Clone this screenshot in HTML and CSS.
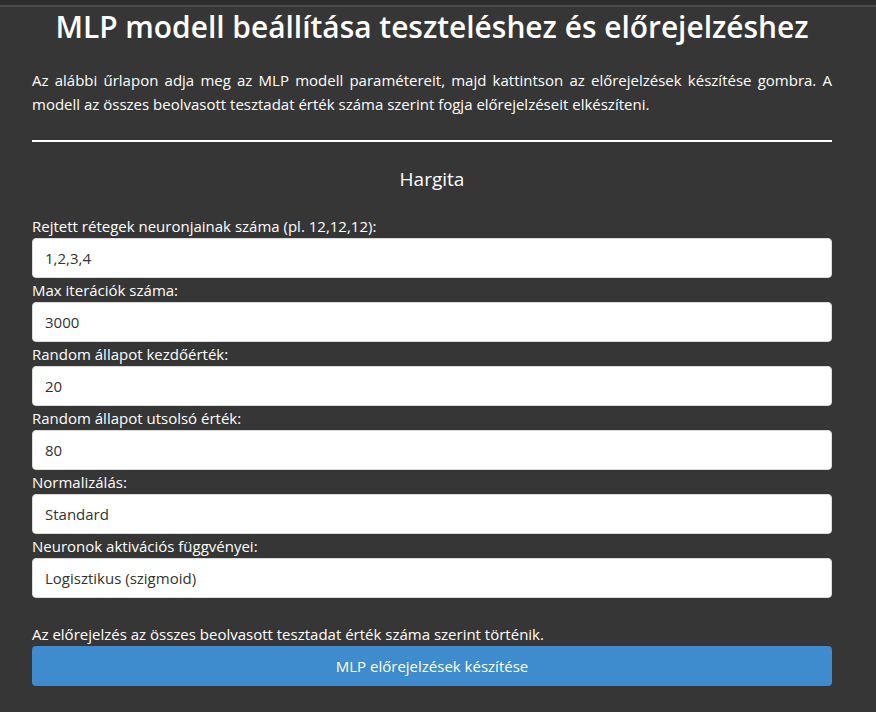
FILE: index.html
```html
<!DOCTYPE html>
<html lang="hu">
<head>
<meta charset="utf-8">
<title>MLP modell</title>
<link rel="stylesheet" href="styles.css">
</head>
<body>
<div class="topbar"></div>
<main class="container">
  <h1 class="title">MLP modell beállítása teszteléshez és előrejelzéshez</h1>
  <p class="intro">Az alábbi űrlapon adja meg az MLP modell paramétereit, majd kattintson az előrejelzések készítése gombra. A modell az összes beolvasott tesztadat érték száma szerint fogja előrejelzéseit elkészíteni.</p>
  <hr class="divider">
  <h2 class="region">Hargita</h2>
  <form class="form">
    <label class="label">Rejtett rétegek neuronjainak száma (pl. 12,12,12):</label>
    <input class="field" type="text" value="1,2,3,4">
    <label class="label">Max iterációk száma:</label>
    <input class="field" type="text" value="3000">
    <label class="label">Random állapot kezdőérték:</label>
    <input class="field" type="text" value="20">
    <label class="label">Random állapot utsolsó érték:</label>
    <input class="field" type="text" value="80">
    <label class="label">Normalizálás:</label>
    <div class="field select">Standard</div>
    <label class="label">Neuronok aktivációs függvényei:</label>
    <div class="field select">Logisztikus (szigmoid)</div>
    <p class="note">Az előrejelzés az összes beolvasott tesztadat érték száma szerint történik.</p>
    <button class="btn" type="button">MLP előrejelzések készítése</button>
  </form>
</main>
</body>
</html>
```
FILE: styles.css
```css
html, body {
  margin: 0;
  padding: 0;
  background: #363636;
  color: #ffffff;
  font-family: "Open Sans", "Noto Sans", sans-serif;
}
.topbar {
  height: 5px;
  background: #2e2e2e;
  border-bottom: 2px solid #4d4d4d;
}
.container {
  width: 800px;
  margin-left: 32px;
  display: flex;
  flex-direction: column;
}
.title {
  margin: 0;
  font-size: 29.9px;
  font-weight: 600;
  line-height: 40px;
  text-align: center;
  white-space: nowrap;
}
.intro {
  margin: 21px 0 0;
  font-size: 15px;
  line-height: 24px;
  text-align: justify;
}
.divider {
  margin: 24px 0 0;
  border: 0;
  height: 2px;
  background: #ffffff;
}
.region {
  margin: 21px 0 0;
  font-size: 19px;
  font-weight: 400;
  line-height: 32px;
  text-align: center;
}
.form {
  margin-top: 19px;
  display: flex;
  flex-direction: column;
}
.label {
  font-size: 15px;
  line-height: 24px;
}
.field {
  box-sizing: border-box;
  height: 40px;
  margin: 0;
  padding: 0 12px;
  border: 1px solid #dcdcdc;
  border-radius: 4px;
  background: #ffffff;
  color: #333333;
  font-family: inherit;
  font-size: 15px;
  line-height: 38px;
}
.select {
  display: flex;
  align-items: center;
}
.note {
  margin: 24px 0 0;
  font-size: 15px;
  line-height: 24px;
}
.btn {
  height: 40px;
  border: 0;
  border-radius: 4px;
  background: #3e8bcd;
  color: #ffffff;
  font-family: inherit;
  font-size: 15px;
  cursor: pointer;
}
```
